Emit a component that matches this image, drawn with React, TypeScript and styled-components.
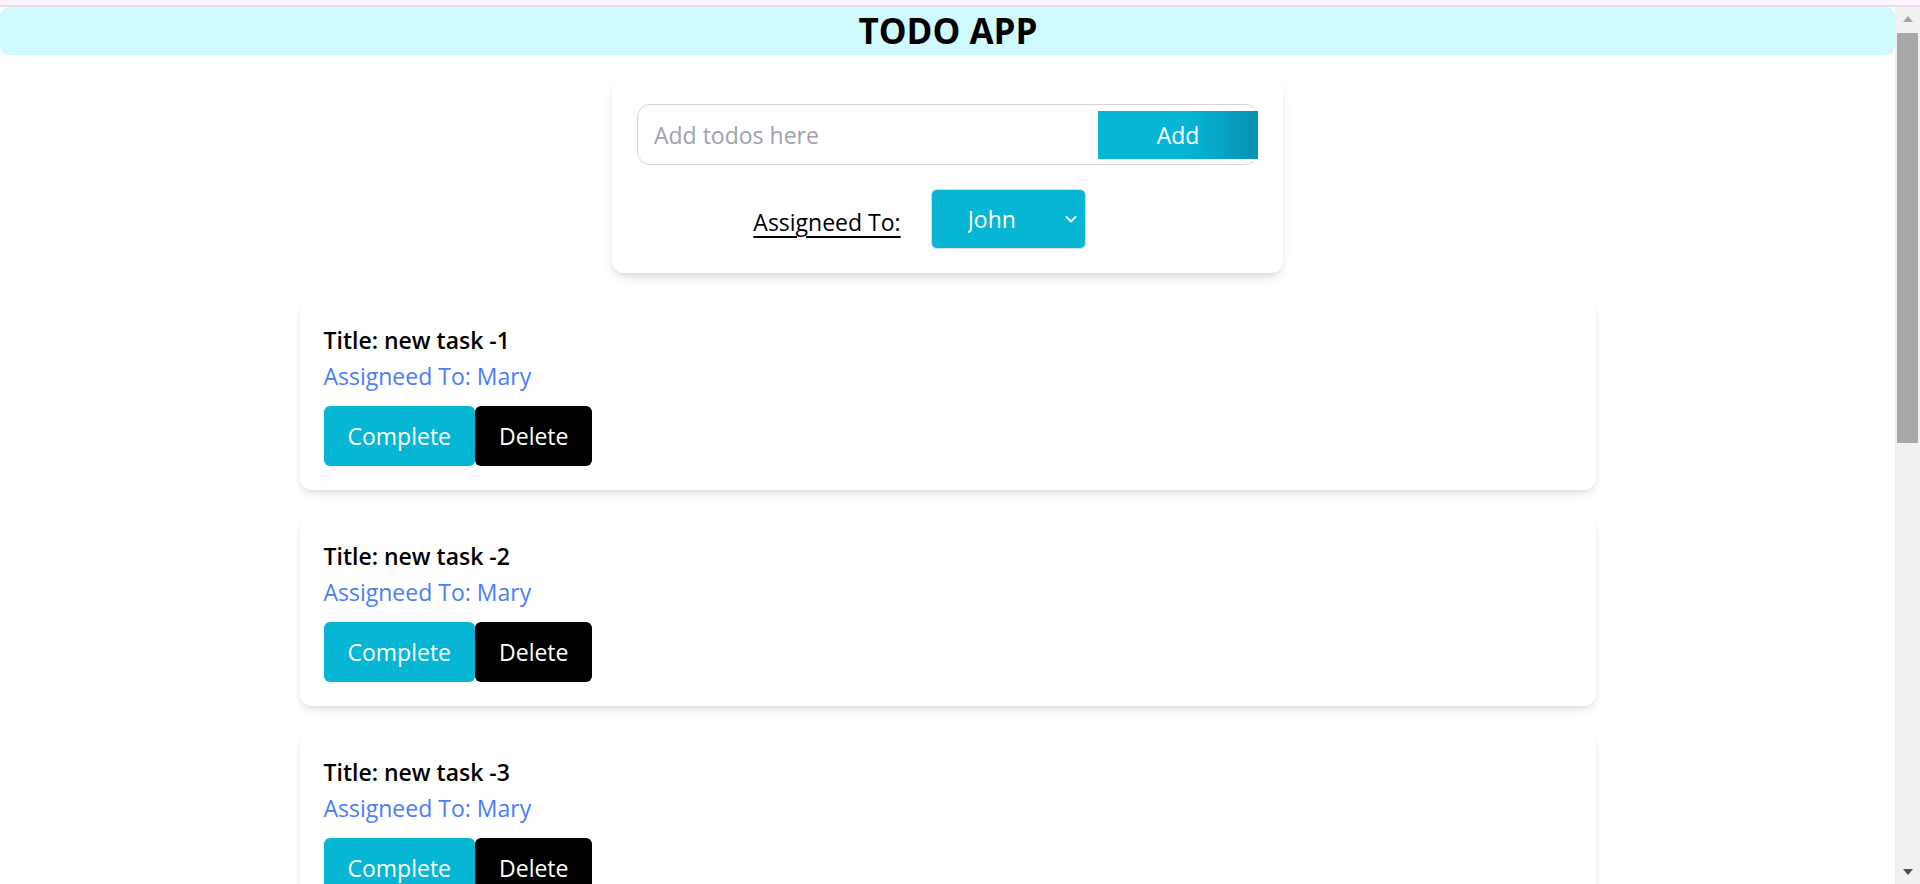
import React from "react";
import styled, { createGlobalStyle } from "styled-components";

const GlobalStyle = createGlobalStyle`
  html, body {
    margin: 0;
    padding: 0;
    background: #ffffff;
    overflow: hidden;
  }
  body {
    font-family: "Open Sans", "Noto Sans", sans-serif;
    color: #000;
  }
  * { box-sizing: border-box; }
`;

const Page = styled.div`
  display: flex;
  flex-direction: column;
  height: 100vh;
  overflow: hidden;
`;

const TopStrip = styled.div`
  height: 7px;
  flex: none;
  background: #fdf4fd;
  border-bottom: 2px solid #ebdeeb;
`;

const Body = styled.div`
  flex: 1;
  min-height: 0;
  display: flex;
`;

const Main = styled.main`
  flex: 1;
  min-width: 0;
  overflow: hidden;
  display: flex;
  flex-direction: column;
  align-items: center;
`;

const Header = styled.header`
  align-self: stretch;
  flex: none;
  height: 48px;
  background: #cffafe;
  border-radius: 9px;
  display: flex;
  align-items: center;
  justify-content: center;
`;

const Title = styled.h1`
  margin: 0;
  font-size: 35px;
  line-height: 48px;
  font-weight: 700;
  padding-left: 1px;
`;

const FormCard = styled.section`
  flex: none;
  width: 671px;
  margin-top: 25px;
  padding: 24px 25px 24px;
  background: #fff;
  border-radius: 12px;
  box-shadow: 0 6px 12px -2px rgba(0, 0, 0, 0.12), 0 3px 6px -3px rgba(0, 0, 0, 0.1);
  display: flex;
  flex-direction: column;
  gap: 24px;
`;

const InputBox = styled.div`
  display: flex;
  align-items: center;
  height: 61px;
  border: 1px solid #d4d4dc;
  border-radius: 13px;
  padding: 5px 0;
`;

const TodoInput = styled.input`
  flex: 1;
  min-width: 0;
  border: none;
  outline: none;
  background: transparent;
  padding: 0 0 0 16px;
  font-family: inherit;
  font-size: 23px;
  color: #111;
  &::placeholder {
    color: #9ca3af;
  }
`;

const AddButton = styled.button`
  flex: none;
  width: 160px;
  height: 48px;
  margin-right: -1px;
  border: none;
  background: linear-gradient(to right, #06b6d4 55%, #0891b2 100%);
  color: #fff;
  font-family: inherit;
  font-size: 23px;
  cursor: pointer;
`;

const AssignRow = styled.div`
  display: flex;
  align-items: center;
  justify-content: center;
  gap: 30px;
  padding-right: 56px;
`;

const AssignLabel = styled.label`
  font-size: 23px;
  line-height: 34px;
  text-decoration: underline;
  text-underline-offset: 5px;
  text-decoration-thickness: 1.5px;
  padding-top: 6px;
`;

const SelectWrap = styled.div`
  position: relative;
  width: 155px;
  height: 60px;
`;

const AssignSelect = styled.select`
  appearance: none;
  -webkit-appearance: none;
  width: 100%;
  height: 100%;
  border: 1px solid #d8dde3;
  border-radius: 6px;
  background: #06b6d4;
  color: #fff;
  font-family: inherit;
  font-size: 23px;
  padding: 0 0 0 36px;
  outline: none;
`;

const Chevron = styled.svg`
  position: absolute;
  right: 9px;
  top: 26px;
  width: 12px;
  height: 8px;
  pointer-events: none;
`;

const List = styled.div`
  display: flex;
  flex-direction: column;
  align-items: center;
  gap: 24px;
  margin-top: 25px;
  flex: none;
`;

const TodoCard = styled.article`
  width: 1296px;
  height: 192px;
  flex: none;
  padding: 24px;
  background: #fff;
  border-radius: 12px;
  box-shadow: 0 6px 10px -2px rgba(0, 0, 0, 0.1), 0 2px 6px -2px rgba(0, 0, 0, 0.08);
  display: flex;
  flex-direction: column;
`;

const TodoTitle = styled.div`
  font-size: 23px;
  line-height: 36px;
  font-weight: 600;
`;

const TodoAssignee = styled.div`
  font-size: 23px;
  line-height: 36px;
  color: #4a7ef6;
`;

const Actions = styled.div`
  display: flex;
  margin-top: 12px;
`;

const ActionButton = styled.button<{ $variant: "complete" | "delete" }>`
  height: 60px;
  padding: 0 24px;
  border: none;
  border-radius: 6px;
  background: ${(p) => (p.$variant === "complete" ? "#06b6d4" : "#000")};
  color: #fff;
  font-family: inherit;
  font-size: 23px;
  cursor: pointer;
`;

const Scrollbar = styled.div`
  flex: none;
  width: 25px;
  background: #f1f1f1;
  display: flex;
  flex-direction: column;
  align-items: center;
`;

const ArrowBox = styled.div`
  flex: none;
  height: 24px;
  display: flex;
  align-items: center;
  justify-content: center;
`;

const Track = styled.div`
  flex: 1;
  width: 100%;
  display: flex;
  justify-content: center;
`;

const Thumb = styled.div`
  width: 21px;
  height: 410px;
  margin-top: 2px;
  background: #a8a8a8;
`;

const todos = [1, 2, 3, 4];

export default function App() {
  return (
    <>
      <GlobalStyle />
      <Page>
        <TopStrip />
        <Body>
          <Main>
            <Header>
              <Title>TODO APP</Title>
            </Header>
            <FormCard>
              <InputBox>
                <TodoInput placeholder="Add todos here" />
                <AddButton>Add</AddButton>
              </InputBox>
              <AssignRow>
                <AssignLabel>Assigneed To:</AssignLabel>
                <SelectWrap>
                  <AssignSelect defaultValue="John">
                    <option>John</option>
                    <option>Mary</option>
                  </AssignSelect>
                  <Chevron viewBox="0 0 12 8">
                    <polyline points="1,1.5 6,6.5 11,1.5" fill="none" stroke="#fff" strokeWidth="1.8" />
                  </Chevron>
                </SelectWrap>
              </AssignRow>
            </FormCard>
            <List>
              {todos.map((n) => (
                <TodoCard key={n}>
                  <TodoTitle>Title: new task -{n}</TodoTitle>
                  <TodoAssignee>Assigneed To: Mary</TodoAssignee>
                  <Actions>
                    <ActionButton $variant="complete">Complete</ActionButton>
                    <ActionButton $variant="delete">Delete</ActionButton>
                  </Actions>
                </TodoCard>
              ))}
            </List>
          </Main>
          <Scrollbar>
            <ArrowBox>
              <svg width="10" height="6" viewBox="0 0 10 6">
                <polygon points="0,6 5,0 10,6" fill="#a3a3a3" />
              </svg>
            </ArrowBox>
            <Track>
              <Thumb />
            </Track>
            <ArrowBox>
              <svg width="10" height="6" viewBox="0 0 10 6">
                <polygon points="0,0 10,0 5,6" fill="#505050" />
              </svg>
            </ArrowBox>
          </Scrollbar>
        </Body>
      </Page>
    </>
  );
}
